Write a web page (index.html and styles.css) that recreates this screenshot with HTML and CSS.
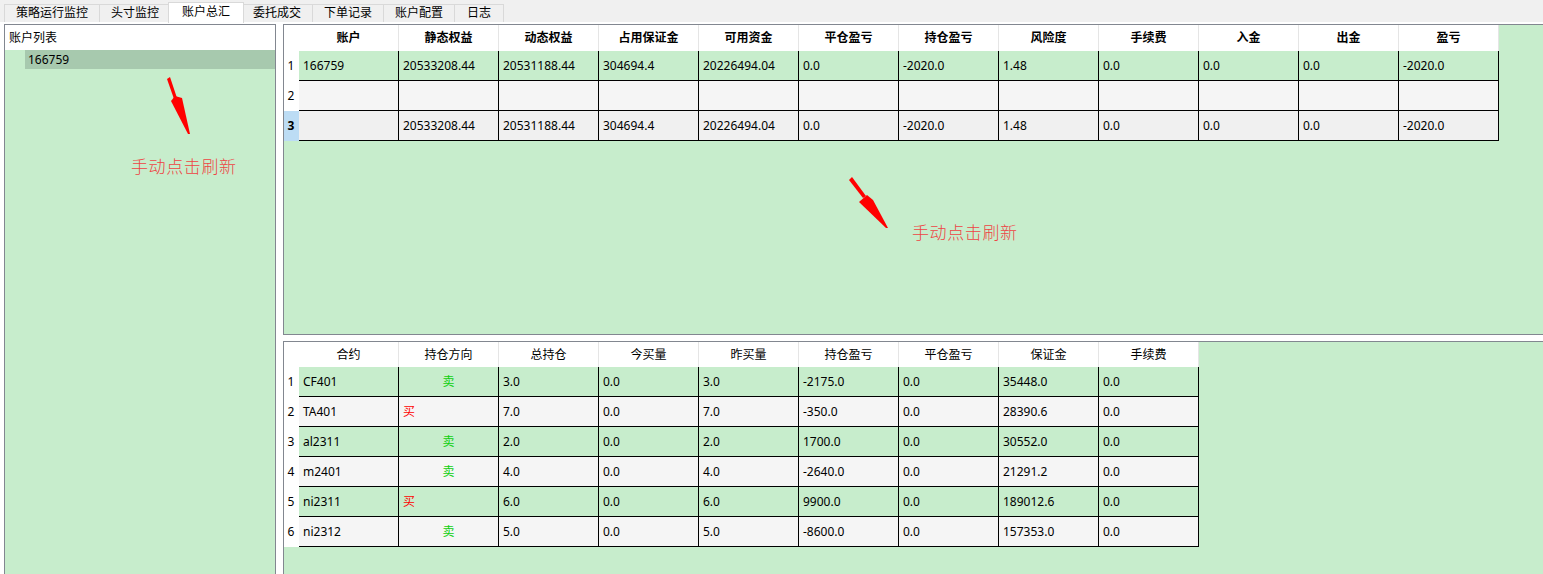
FILE: index.html
```html
<!DOCTYPE html>
<html lang="zh-CN">
<head>
<meta charset="utf-8">
<title>账户总汇</title>
<link rel="stylesheet" href="styles.css">
</head>
<body>
<div class="tabbar">
  <div class="tab">策略运行监控</div>
  <div class="tab">头寸监控</div>
  <div class="tab active">账户总汇</div>
  <div class="tab">委托成交</div>
  <div class="tab">下单记录</div>
  <div class="tab">账户配置</div>
  <div class="tab">日志</div>
</div>
<div class="page">
  <div class="panel left">
    <div class="list-head">账户列表</div>
    <div class="list-item">166759</div>
  </div>
  <div class="right">
    <div class="panel top">
      <div class="grid g12">
        <div class="rn hd"></div>
        <div class="h">账户</div><div class="h">静态权益</div><div class="h">动态权益</div><div class="h">占用保证金</div><div class="h">可用资金</div><div class="h">平仓盈亏</div><div class="h">持仓盈亏</div><div class="h">风险度</div><div class="h">手续费</div><div class="h">入金</div><div class="h">出金</div><div class="h">盈亏</div>

        <div class="rn">1</div>
        <div class="c g">166759</div><div class="c g">20533208.44</div><div class="c g">20531188.44</div><div class="c g">304694.4</div><div class="c g">20226494.04</div><div class="c g">0.0</div><div class="c g">-2020.0</div><div class="c g">1.48</div><div class="c g">0.0</div><div class="c g">0.0</div><div class="c g">0.0</div><div class="c g">-2020.0</div>

        <div class="rn">2</div>
        <div class="c w"></div><div class="c w"></div><div class="c w"></div><div class="c w"></div><div class="c w"></div><div class="c w"></div><div class="c w"></div><div class="c w"></div><div class="c w"></div><div class="c w"></div><div class="c w"></div><div class="c w"></div>

        <div class="rn sel">3</div>
        <div class="c w2"></div><div class="c w2">20533208.44</div><div class="c w2">20531188.44</div><div class="c w2">304694.4</div><div class="c w2">20226494.04</div><div class="c w2">0.0</div><div class="c w2">-2020.0</div><div class="c w2">1.48</div><div class="c w2">0.0</div><div class="c w2">0.0</div><div class="c w2">0.0</div><div class="c w2">-2020.0</div>
      </div>
    </div>
    <div class="panel bottom">
      <div class="grid g9">
        <div class="rn hd"></div>
        <div class="h">合约</div><div class="h">持仓方向</div><div class="h">总持仓</div><div class="h">今买量</div><div class="h">昨买量</div><div class="h">持仓盈亏</div><div class="h">平仓盈亏</div><div class="h">保证金</div><div class="h">手续费</div>

        <div class="rn">1</div>
        <div class="c g">CF401</div><div class="c g sell">卖</div><div class="c g">3.0</div><div class="c g">0.0</div><div class="c g">3.0</div><div class="c g">-2175.0</div><div class="c g">0.0</div><div class="c g">35448.0</div><div class="c g">0.0</div>

        <div class="rn">2</div>
        <div class="c w">TA401</div><div class="c w buy">买</div><div class="c w">7.0</div><div class="c w">0.0</div><div class="c w">7.0</div><div class="c w">-350.0</div><div class="c w">0.0</div><div class="c w">28390.6</div><div class="c w">0.0</div>

        <div class="rn">3</div>
        <div class="c g">al2311</div><div class="c g sell">卖</div><div class="c g">2.0</div><div class="c g">0.0</div><div class="c g">2.0</div><div class="c g">1700.0</div><div class="c g">0.0</div><div class="c g">30552.0</div><div class="c g">0.0</div>

        <div class="rn">4</div>
        <div class="c w">m2401</div><div class="c w sell">卖</div><div class="c w">4.0</div><div class="c w">0.0</div><div class="c w">4.0</div><div class="c w">-2640.0</div><div class="c w">0.0</div><div class="c w">21291.2</div><div class="c w">0.0</div>

        <div class="rn">5</div>
        <div class="c g">ni2311</div><div class="c g buy">买</div><div class="c g">6.0</div><div class="c g">0.0</div><div class="c g">6.0</div><div class="c g">9900.0</div><div class="c g">0.0</div><div class="c g">189012.6</div><div class="c g">0.0</div>

        <div class="rn">6</div>
        <div class="c w">ni2312</div><div class="c w sell">卖</div><div class="c w">5.0</div><div class="c w">0.0</div><div class="c w">5.0</div><div class="c w">-8600.0</div><div class="c w">0.0</div><div class="c w">157353.0</div><div class="c w">0.0</div>
      </div>
    </div>
  </div>
</div>

<div class="note note-left">手动点击刷新</div>
<div class="note note-right">手动点击刷新</div>
<svg class="arrows" width="1543" height="574" viewBox="0 0 1543 574" aria-hidden="true">
  <g fill="#ff0000">
    <polygon points="167,79 170,77 177,98 174,99"/>
    <polygon points="171,101 175,96 182,98 190,134 188,134"/>
    <polygon points="849,180 852,177 866,196 863,198"/>
    <polygon points="859,202 867,195 873,200 888,228 886,228"/>
  </g>
</svg>
</body>
</html>
```

FILE: styles.css
```css
* { box-sizing: border-box; }

html, body {
  margin: 0;
  padding: 0;
  overflow: hidden;
}

body {
  position: relative;
  width: 1543px;
  height: 574px;
  background: #ffffff;
  font-family: "Noto Sans", "Noto Sans CJK SC", sans-serif;
  font-size: 12px;
  color: #000;
}

/* ---------- tabs ---------- */
.tabbar {
  display: flex;
  align-items: flex-end;
  height: 22px;
  padding-left: 4px;
  background: #f0f0f0;
}

.tab {
  height: 18px;
  line-height: 16px;
  padding: 0 11px;
  margin-right: -1px;
  border: 1px solid #d9d9d9;
  border-bottom: none;
  background: #f0f0f0;
  white-space: nowrap;
}

.tab:last-child { padding: 0 12px; }

.tab.active {
  position: relative;
  z-index: 1;
  height: 21px;
  line-height: 18px;
  padding: 0 13px;
  margin: 0 -3px -1px -2px;
  background: #ffffff;
}

/* ---------- page layout ---------- */
.page {
  display: flex;
  gap: 7px;
  height: 552px;
  padding: 2px 0 0 4px;
  background: #ffffff;
}

.panel {
  border: 1px solid #828790;
  background: #c7edcc;
}

.left {
  flex: none;
  width: 272px;
  height: 570px;
}

.list-head {
  height: 25px;
  line-height: 25px;
  padding-left: 4px;
  background: #ffffff;
}

.list-item {
  height: 19px;
  line-height: 19px;
  margin-left: 20px;
  padding-left: 3px;
  background: #a7c9ae;
}

.right {
  flex: none;
  width: 1262px;
  display: flex;
  flex-direction: column;
  gap: 6px;
}

.top { height: 311px; flex: none; }
.bottom { height: 260px; flex: none; }

/* ---------- grids ---------- */
.grid {
  display: grid;
  grid-template-columns: 15px repeat(12, 100px);
  grid-auto-rows: 30px;
  grid-template-rows: 26px;
}

.g9 {
  grid-template-columns: 15px repeat(9, 100px);
  grid-template-rows: 25px;
}

.h {
  background: #ffffff;
  border-right: 1px solid #e5e5e5;
  text-align: center;
  line-height: 26px;
  font-weight: bold;
  white-space: nowrap;
}

.g9 .h {
  line-height: 25px;
  font-weight: normal;
}

.rn {
  background: #ffffff;
  text-align: center;
  line-height: 30px;
  padding-right: 1px;
}

.rn.sel {
  background: #bcdcf4;
  font-weight: bold;
}

.c {
  border-right: 1px solid #000;
  border-bottom: 1px solid #000;
  padding-left: 4px;
  line-height: 29px;
  white-space: nowrap;
  overflow: hidden;
}

.g { background: #c7edcc; }
.w { background: #f5f5f5; }
.w2 { background: #f0f0f0; }

.sell {
  text-align: center;
  padding-left: 0;
  color: #0ed00e;
}

.buy { color: #ff0000; }

/* ---------- annotations ---------- */
.note {
  position: absolute;
  font-family: "Noto Sans CJK SC", sans-serif;
  font-size: 17px;
  font-weight: 300;
  line-height: 17px;
  letter-spacing: 0.6px;
  color: #ee4444;
  white-space: nowrap;
}

.note-left { left: 131px; top: 157px; }
.note-right { left: 912px; top: 223px; }

.arrows {
  position: absolute;
  left: 0;
  top: 0;
  pointer-events: none;
}
```
